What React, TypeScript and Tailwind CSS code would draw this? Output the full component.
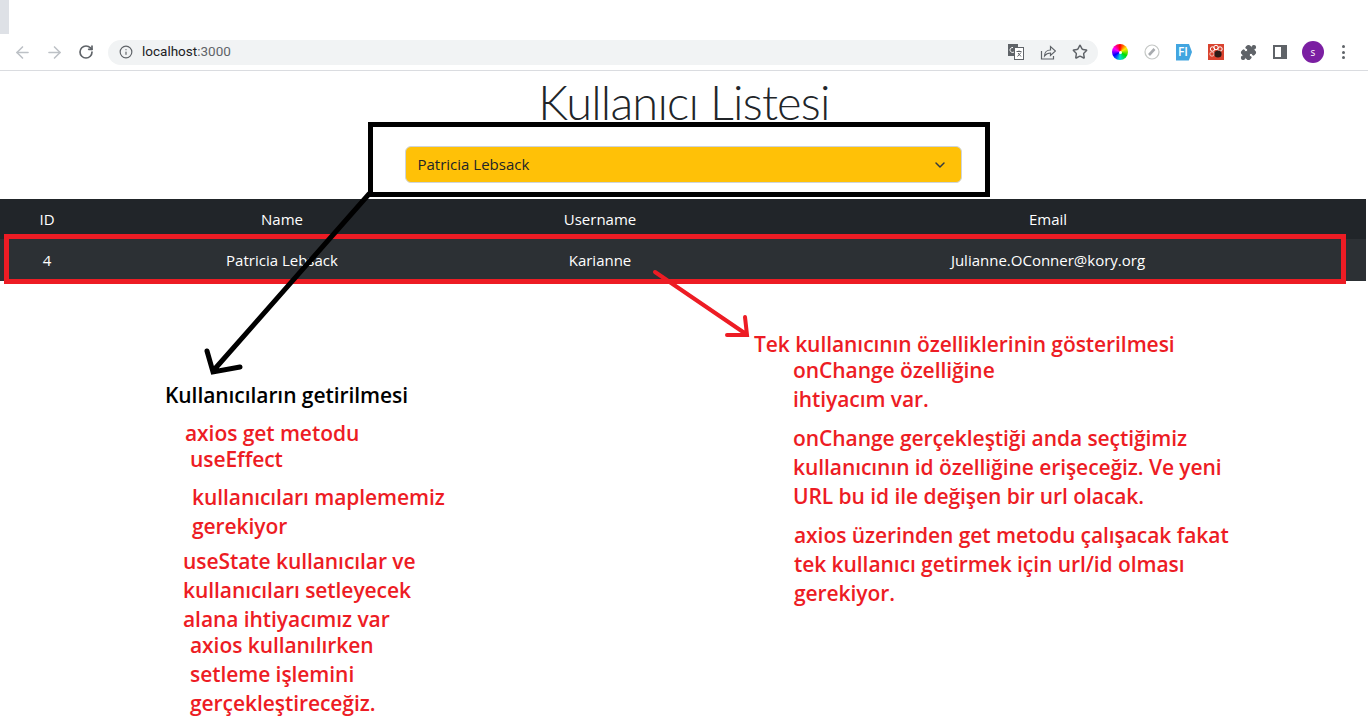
import { ArrowLeft, ArrowRight, RotateCw, Info, Star, Puzzle, ChevronDown } from 'lucide-react';

const font = { fontFamily: '"Open Sans", sans-serif' };

const notes = [
  { text: 'Kullanıcıların getirilmesi', cls: 'left-[165px] top-[381px] text-black' },
  { text: 'axios get metodu', cls: 'left-[185px] top-[419px]' },
  { text: 'useEffect', cls: 'left-[190px] top-[445px]' },
  { text: 'kullanıcıları maplememiz', cls: 'left-[192px] top-[483px]' },
  { text: 'gerekiyor', cls: 'left-[192px] top-[512px]' },
  { text: 'useState kullanıcılar ve', cls: 'left-[183px] top-[547px]' },
  { text: 'kullanıcıları setleyecek', cls: 'left-[183px] top-[576px]' },
  { text: 'alana ihtiyacımız var', cls: 'left-[183px] top-[605px]' },
  { text: 'axios kullanılırken', cls: 'left-[190px] top-[631px]' },
  { text: 'setleme işlemini', cls: 'left-[190px] top-[660px]' },
  { text: 'gerçekleştireceğiz.', cls: 'left-[190px] top-[689px]' },
  { text: 'Tek kullanıcının özelliklerinin gösterilmesi', cls: 'left-[754px] top-[330px]' },
  { text: 'onChange özelliğine', cls: 'left-[793px] top-[356px]' },
  { text: 'ihtiyacım var.', cls: 'left-[793px] top-[385px]' },
  { text: 'onChange gerçekleştiği anda seçtiğimiz', cls: 'left-[793px] top-[424px]' },
  { text: 'kullanıcının id özelliğine erişeceğiz. Ve yeni', cls: 'left-[793px] top-[453px]' },
  { text: 'URL bu id ile değişen bir url olacak.', cls: 'left-[793px] top-[482px]' },
  { text: 'axios üzerinden get metodu çalışacak fakat', cls: 'left-[794px] top-[521px]' },
  { text: 'tek kullanıcı getirmek için url/id olması', cls: 'left-[794px] top-[550px]' },
  { text: 'gerekiyor.', cls: 'left-[794px] top-[579px]' },
];

function Toolbar() {
  return (
    <div className="flex h-[37px] items-center border-b border-[#dadce0] bg-white">
      <ArrowLeft className="ml-[13px] h-[19px] w-[19px] text-[#bdc1c6]" strokeWidth={2} />
      <ArrowRight className="ml-[13px] h-[19px] w-[19px] text-[#bdc1c6]" strokeWidth={2} />
      <RotateCw className="ml-[14px] h-[16px] w-[16px] text-[#5f6368]" strokeWidth={2.5} />
      <div className="ml-[14px] mt-[1px] flex h-[25px] w-[990px] items-center rounded-full bg-[#f1f3f4] pb-[2px]">
        <Info className="ml-[11px] h-[14px] w-[14px] text-[#5f6368]" strokeWidth={2} />
        <span className="ml-[9px] text-[13.5px] text-[#202124]" style={{ fontFamily: 'Roboto, sans-serif' }}>
          localhost<span className="text-[#5f6368]">:3000</span>
        </span>
        <div className="ml-auto mr-[10px] flex items-center gap-[16px] text-[#5f6368]">
          <svg viewBox="0 0 16 16" className="h-[16px] w-[16px]">
            <rect x="0" y="0" width="10" height="12" fill="#5f6368" />
            <rect x="6.5" y="3.5" width="9" height="12" fill="#fff" stroke="#5f6368" />
            <path d="M8.5 7.5h5M11 6.5v1M9.5 12.5l3.5-4M10 9l3 3.5" stroke="#5f6368" fill="none" />
            <path d="M5 3.5a2.5 2.5 0 1 0 1 4.5" stroke="#fff" fill="none" />
          </svg>
          <svg viewBox="0 0 16 16" className="h-[16px] w-[16px]" fill="none" stroke="currentColor" strokeWidth="1.2">
            <path d="M1.5 7v8h12v-3" />
            <path d="M4.5 12c0-3.5 2.5-6 6-6V2.5L15.5 7l-5 4.500V9c-2.500 0-4.500 1-6 3z" />
          </svg>
          <Star className="h-[16px] w-[16px]" strokeWidth={2.2} />
        </div>
      </div>
      <div className="ml-[14px] flex items-center gap-[16px]">
        <div className="flex h-[16px] w-[16px] items-center justify-center rounded-full bg-[conic-gradient(#ff0000,#ffee00,#00dd00,#00dddd,#0000ff,#ff00ff,#ff0000)]">
          <div className="h-[3px] w-[3px] rounded-full bg-white" />
        </div>
        <svg viewBox="0 0 16 16" className="h-[16px] w-[16px]">
          <circle cx="8" cy="8" r="7" fill="#fff" stroke="#c4c7c5" strokeWidth="1.2" />
          <path d="M5 11l5.500-6" stroke="#a8abaf" strokeWidth="2.600" />
        </svg>
        <div className="flex h-[17px] w-[16px] items-center justify-center bg-[#42a5e0] pr-[2px] text-[12px] font-semibold leading-none text-white [clip-path:polygon(0_0,80%_0,100%_50%,80%_100%,0_100%)]">
          FI
        </div>
        <svg viewBox="0 0 16 16" className="h-[16px] w-[16px]">
          <rect width="16" height="16" fill="#d9432f" />
          <circle cx="4.500" cy="5" r="2.200" fill="none" stroke="#fff" />
          <circle cx="8" cy="3.500" r="2.200" fill="none" stroke="#fff" />
          <circle cx="12" cy="5" r="2.200" fill="none" stroke="#fff" />
          <circle cx="4" cy="10" r="2.200" fill="none" stroke="#f4c7bd" />
          <circle cx="10" cy="10" r="3.600" fill="#2a1a16" />
        </svg>
        <Puzzle className="h-[17px] w-[17px] fill-[#5f6368] text-[#5f6368]" strokeWidth={1.5} />
        <div className="h-[14px] w-[14px] border-2 border-r-[6px] border-[#5f6368] bg-white" />
        <div className="flex h-[22px] w-[22px] -translate-x-[1px] items-center justify-center rounded-full bg-[#7b1fa2] text-[10px] font-medium text-white">
          s
        </div>
        <div className="ml-[1px] flex flex-col gap-[2.5px]">
          <span className="h-[3px] w-[3px] rounded-full bg-[#5f6368]" />
          <span className="h-[3px] w-[3px] rounded-full bg-[#5f6368]" />
          <span className="h-[3px] w-[3px] rounded-full bg-[#5f6368]" />
        </div>
      </div>
    </div>
  );
}

function UserTable() {
  return (
    <table className="w-[1366px] table-fixed text-center text-[15px] text-white">
      <thead>
        <tr className="h-[40px] bg-[#212529] font-normal">
          <th className="w-[94px] font-normal">ID</th>
          <th className="w-[376px] font-normal">Name</th>
          <th className="w-[260px] font-normal">Username</th>
          <th className="font-normal">Email</th>
        </tr>
      </thead>
      <tbody>
        <tr className="h-[42px] bg-[#2c3034]">
          <td>4</td>
          <td>Patricia Lebsack</td>
          <td>Karianne</td>
          <td>Julianne.OConner@kory.org</td>
        </tr>
      </tbody>
    </table>
  );
}

export default function App() {
  return (
    <div className="relative h-[728px] w-[1368px] overflow-hidden bg-white" style={font}>
      <div className="h-[34px]">
        <div className="h-[34px] w-[9px] bg-[#dee1e6]" />
      </div>
      <Toolbar />

      <h1 className="mt-[1px] h-[60px] text-center text-[47px] font-light leading-[60px] tracking-[-0.8px] text-[#212529]" style={{ fontFamily: 'Lato, sans-serif' }}>
        Kullanıcı Listesi
      </h1>

      <div className="mt-[14px] flex justify-center pr-[2px]">
        <div className="flex h-[37px] w-[557px] items-center justify-between rounded-[6px] border border-[#ced4da] bg-[#ffc107] pl-[12px] pr-[13px] text-[15px] text-[#212529]">
          <span>Patricia Lebsack</span>
          <ChevronDown className="h-[16px] w-[16px] text-[#343a40]" strokeWidth={2.2} />
        </div>
      </div>

      <div className="mt-[16px]">
        <UserTable />
      </div>

      {/* annotations drawn on top of the screenshot */}
      <div className="absolute left-[368px] top-[122px] h-[75px] w-[622px] border-[5px] border-black" />
      <div className="absolute left-[4px] top-[234px] h-[50px] w-[1342px] border-[5px] border-[#ed1c24]" />

      <svg className="absolute left-0 top-0 h-[728px] w-[1368px]" viewBox="0 0 1368 728" fill="none" strokeLinecap="round">
        <path d="M369 194L213 371M207 351L213 372L240 367" stroke="#000" strokeWidth="5" />
        <path d="M655 272L746 334M745 317L747 335L727 335" stroke="#ed1c24" strokeWidth="4" />
      </svg>

      {notes.map((n) => (
        <div
          key={n.text}
          className={`absolute whitespace-nowrap text-[21px] font-semibold leading-[28px] tracking-[-0.07px] text-[#ed1c24] ${n.cls}`}
        >
          {n.text}
        </div>
      ))}
    </div>
  );
}
